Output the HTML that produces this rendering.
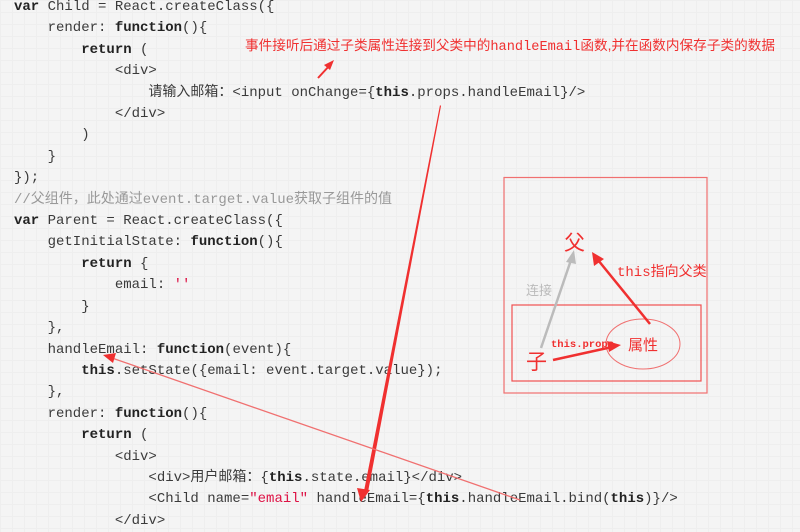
<!DOCTYPE html>
<html><head><meta charset="utf-8"><style>
html,body{margin:0;padding:0;}
body{width:800px;height:530px;overflow:hidden;position:relative;
background-color:#f4f4f4;
background-image:linear-gradient(#eeeeee 1px,transparent 1px),linear-gradient(90deg,#eeeeee 1px,transparent 1px);
background-size:12px 12px;}
pre{position:absolute;left:14px;top:-3px;margin:0;font-family:"Liberation Mono","Noto Sans CJK SC",monospace;font-size:14px;line-height:21.4px;color:#3a3a3a;}
b{color:#222;}
.s{color:#d14;}
.c{color:#999;}
svg{position:absolute;left:0;top:0;}
</style></head><body>
<pre><b>var</b> Child = React.createClass({
    render: <b>function</b>(){
        <b>return</b> (
            &lt;div&gt;
                请输入邮箱：&lt;input onChange={<b>this</b>.props.handleEmail}/&gt;
            &lt;/div&gt;
        )
    }
});
<span class="c">//父组件，此处通过event.target.value获取子组件的值</span>
<b>var</b> Parent = React.createClass({
    getInitialState: <b>function</b>(){
        <b>return</b> {
            email: <span class="s">''</span>
        }
    },
    handleEmail: <b>function</b>(event){
        <b>this</b>.setState({email: event.target.value});
    },
    render: <b>function</b>(){
        <b>return</b> (
            &lt;div&gt;
                &lt;div&gt;用户邮箱：{<b>this</b>.state.email}&lt;/div&gt;
                &lt;Child name=<span class="s">"email"</span> handleEmail={<b>this</b>.handleEmail.bind(<b>this</b>)}/&gt;
            &lt;/div&gt;</pre>
<svg width="800" height="530" viewBox="0 0 800 530" font-family="Liberation Sans,Noto Sans CJK SC,sans-serif">
<text x="245" y="50" fill="#f03030" font-size="13.5" textLength="530" lengthAdjust="spacingAndGlyphs">事件接听后通过子类属性连接到父类中的<tspan font-family="Liberation Mono,monospace">handleEmail</tspan>函数,并在函数内保存子类的数据</text>
<line x1="318" y1="78" x2="330" y2="65" stroke="#f03030" stroke-width="2"/>
<polygon points="334,60 324,65 330,70" fill="#f03030"/>
<polygon points="440,105 441,106 368,492 364,491" fill="#f03030"/>
<polygon points="361,502 357,488 370,490" fill="#f03030"/>
<line x1="520" y1="500" x2="112" y2="358" stroke="#f07070" stroke-width="1.3"/>
<polygon points="103,355 116,353 113,363" fill="#f03030"/>
<rect x="504" y="177.5" width="203" height="215.5" fill="none" stroke="#f07070" stroke-width="1.2"/>
<rect x="512" y="305" width="189" height="76" fill="none" stroke="#f05050" stroke-width="1.2"/>
<ellipse cx="643" cy="344" rx="37" ry="25" fill="none" stroke="#f07070" stroke-width="1"/>
<text x="564" y="250" fill="#f03030" font-size="21">父</text>
<text x="526" y="369" fill="#f03030" font-size="21">子</text>
<text x="628" y="350" fill="#f03030" font-size="15">属性</text>
<text x="551" y="347" fill="#f03030" font-size="10.5" font-weight="bold" font-family="Liberation Mono,monospace">this.props</text>
<text x="617" y="276" fill="#f03030" font-size="14"><tspan font-family="Liberation Mono,monospace">this</tspan>指向父类</text>
<text x="526" y="295" fill="#bbb" font-size="13">连接</text>
<line x1="541" y1="348" x2="571" y2="260" stroke="#bbb" stroke-width="2.5"/>
<polygon points="574,250 566,262 576,264" fill="#bbb"/>
<line x1="650" y1="324" x2="598" y2="260" stroke="#f03030" stroke-width="2.5"/>
<polygon points="592,252 594,266 604,259" fill="#f03030"/>
<line x1="553" y1="360" x2="612" y2="347" stroke="#f03030" stroke-width="2.5"/>
<polygon points="621,345 607,341 609,352" fill="#f03030"/>
</svg>
</body></html>
